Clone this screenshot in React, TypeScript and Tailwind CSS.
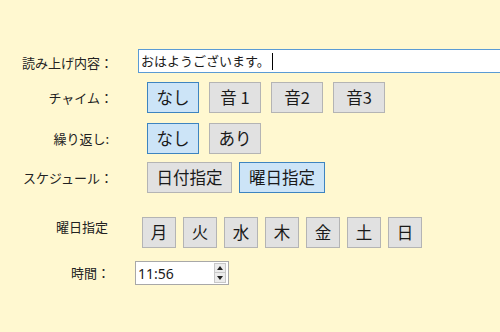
import React from "react";

const jp = { fontFamily: '"Noto Sans CJK JP", "Noto Sans", sans-serif' };

function Btn({ label, selected, w }: { label: string; selected?: boolean; w: string }) {
  return (
    <div
      className={`${w} h-[31px] flex items-center justify-center border text-[16.5px] leading-none text-[#1a1a1a] ${
        selected ? "bg-[#cce4f7] border-[#3d84c0]" : "bg-[#e1e1e1] border-[#b4b4b4]"
      }`}
    >
      {label}
    </div>
  );
}

export default function App() {
  return (
    <div className="w-[500px] h-[332px] bg-[#fff8d0] overflow-hidden pt-[49px]" style={jp}>
      {/* Row 1 */}
      <div className="flex items-center h-[24px]">
        <div className="w-[113px] shrink-0 text-right text-[13px] text-[#222] pt-[3px]">読み上げ内容：</div>
        <div className="ml-[25px] w-[380px] shrink-0 h-[24px] bg-white border border-[#5a9bd4] flex items-center pl-[2px] text-[13px] text-[#1a1a1a]">
          おはようございます。
          <span className="inline-block w-px h-[17px] bg-black ml-[2px]" />
        </div>
      </div>
      {/* Row 2 */}
      <div className="flex items-center mt-[9px]">
        <div className="w-[113px] shrink-0 text-right text-[13px] text-[#222]">チャイム：</div>
        <div className="ml-[34px] flex gap-[10px]">
          <Btn label="なし" selected w="w-[52px]" />
          <Btn label="音 1" w="w-[52px]" />
          <Btn label="音2" w="w-[52px]" />
          <Btn label="音3" w="w-[52px]" />
        </div>
      </div>
      {/* Row 3 */}
      <div className="flex items-center mt-[10px]">
        <div className="w-[109px] mr-[4px] shrink-0 text-right text-[13px] text-[#222]">繰り返し:</div>
        <div className="ml-[34px] flex gap-[10px]">
          <Btn label="なし" selected w="w-[52px]" />
          <Btn label="あり" w="w-[52px]" />
        </div>
      </div>
      {/* Row 4 */}
      <div className="flex items-center mt-[8px]">
        <div className="w-[113px] shrink-0 text-right text-[13px] text-[#222]">スケジュール：</div>
        <div className="ml-[34px] flex gap-[7px]">
          <Btn label="日付指定" w="w-[85px]" />
          <Btn label="曜日指定" selected w="w-[86px]" />
        </div>
      </div>
      {/* Row 5 */}
      <div className="flex items-start mt-[24px]">
        <div className="w-[108px] mr-[5px] shrink-0 text-right text-[13px] text-[#222]">曜日指定</div>
        <div className="ml-[29px] flex gap-[7px]">
          {["月", "火", "水", "木", "金", "土", "日"].map((d) => (
            <Btn key={d} label={d} w="w-[34px]" />
          ))}
        </div>
      </div>
      {/* Row 6 */}
      <div className="flex items-center mt-[13px]">
        <div className="w-[110px] mr-[3px] shrink-0 text-right text-[13px] text-[#222]">時間：</div>
        <div className="ml-[22px] w-[94px] h-[24px] bg-white border border-[#a8a8a8] flex items-center pl-[2px] pr-[2px]">
          <span className="flex-1 text-[14px] text-[#1a1a1a]" style={{ fontFamily: '"Noto Sans", sans-serif' }}>
            11:56
          </span>
          <div className="flex flex-col">
            <div className="w-[12px] h-[10px] bg-[#ececec] border border-[#c8c8c8] flex items-center justify-center">
              <svg width="6" height="4" viewBox="0 0 6 4"><path d="M3 0 L6 4 L0 4 Z" fill="#222" /></svg>
            </div>
            <div className="w-[12px] h-[10px] bg-[#ececec] border border-[#c8c8c8] border-t-0 flex items-center justify-center">
              <svg width="6" height="4" viewBox="0 0 6 4"><path d="M0 0 L6 0 L3 4 Z" fill="#222" /></svg>
            </div>
          </div>
        </div>
      </div>
    </div>
  );
}
